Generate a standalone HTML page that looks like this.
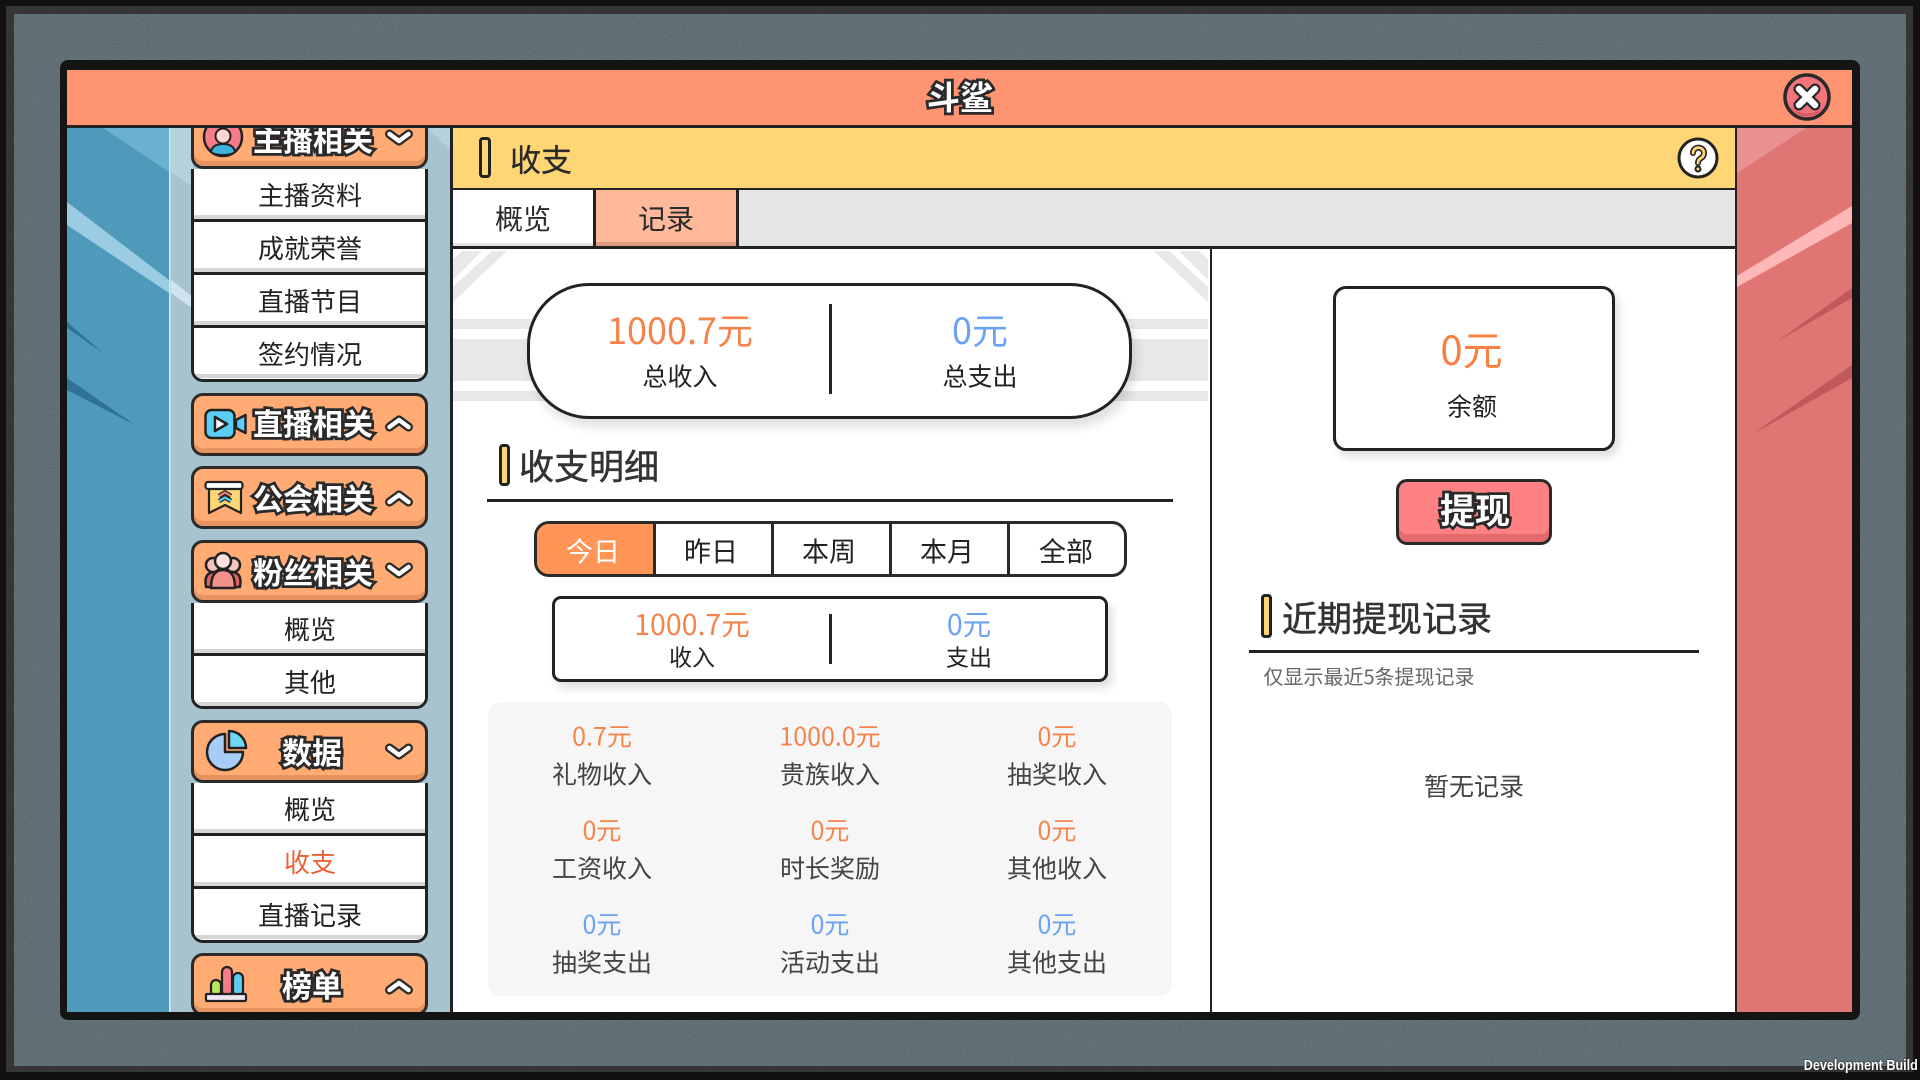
<!DOCTYPE html>
<html lang="zh">
<head>
<meta charset="utf-8">
<title>斗鲨</title>
<style>
html,body{margin:0;padding:0;width:1920px;height:1080px;overflow:hidden;background:#111;font-family:"Noto Sans CJK SC","Liberation Sans",sans-serif;color:#222}
*{box-sizing:border-box}
svg.l{position:absolute;left:0;top:0;width:1920px;height:1080px;display:block}
.a{position:absolute}
.t{position:absolute;transform:translate(-50%,-50%);white-space:nowrap;line-height:1}
.o{color:#F5844C}.b{color:#6BA3F2}
.out{font-weight:700;color:#fff;-webkit-text-stroke:5.5px #2a2a2a;paint-order:stroke fill}
.h{position:absolute;left:191px;width:237px;height:63px;border:3px solid #2a2a2a;border-radius:12px;background:#FFAB73;box-shadow:inset 0 -5px 0 #E6935F}
.g{position:absolute;left:191px;width:237px;border:3px solid #222;border-top:0;border-radius:0 0 12px 12px;background:#fff;overflow:hidden}
.it{height:53px;border-bottom:3px solid #222;background:#fff;box-shadow:inset 0 -4px 0 #d6d6d6}
.it:last-child{height:50px;border-bottom:0}
.mk{position:absolute;background:#FFD676;border:3px solid #222;border-radius:4px}
.ln{position:absolute;background:#222}
.seg{position:absolute;left:534px;top:521px;width:593px;height:56px;border:3px solid #2a2a2a;border-radius:15px;overflow:hidden;background:#fff}
.seg i{position:absolute;top:0;bottom:0;width:3px;background:#2a2a2a}
</style>
</head>
<body>

<svg class="l" viewBox="0 0 1920 1080" xmlns="http://www.w3.org/2000/svg">
<defs>
<filter id="n" x="0" y="0" width="100%" height="100%"><feTurbulence type="fractalNoise" baseFrequency="0.9" numOctaves="2" seed="4"/><feColorMatrix values="0 0 0 0 0  0 0 0 0 0  0 0 0 0 0  0.9 0 0 0 -0.25"/></filter>
</defs>
<rect x="0" y="0" width="1920" height="1080" fill="#111"/>
<rect x="6" y="6" width="1907" height="1066" fill="#363636"/>
<rect x="14" y="14" width="1892" height="1052" fill="#68787F"/>
<rect x="14" y="14" width="1892" height="1052" filter="url(#n)" opacity=".35"/>
<rect x="60" y="60" width="1800" height="960" rx="8" fill="#141414"/>
<rect x="67" y="70" width="1785" height="55" fill="#FF9472"/>
<rect x="67" y="125" width="1785" height="3" fill="#222"/>

<!-- left blue -->
<rect x="67" y="128" width="102" height="884" fill="#4F99BB"/>
<polygon points="103,128 169,128 169,172" fill="#6BB1CF"/>
<polygon points="67,202 169,280 169,293 67,225" fill="#9BCDE2"/>
<polygon points="67,322 67,328 103,353" fill="#2F7296"/>
<polygon points="67,378 67,390 135,425" fill="#2F7296"/>
<rect x="169" y="128" width="1.5" height="884" fill="#D5E8F0"/>
<rect x="170.5" y="128" width="279.5" height="884" fill="#A6C3CF"/>
<polygon points="171,128 427,128 450,150 450,128 171,128" fill="#B4D2DE"/>
<polygon points="171,128 193,128 193,187 171,172" fill="#B4D2DE"/>
<polygon points="171,280 193,297 193,309 171,293" fill="#CFE4EC"/>

<!-- right red -->
<rect x="1737" y="128" width="115" height="884" fill="#E07674"/>
<polygon points="1737,128 1806,128 1737,173" fill="#E89092"/>
<polygon points="1852,206 1852,223 1737,287 1737,276" fill="#FFB8B8"/>
<polygon points="1852,288 1852,298 1776,342" fill="#C05A5A"/>
<polygon points="1852,365 1852,378 1751,435" fill="#C05A5A"/>

<!-- centre -->
<rect x="450" y="128" width="1287" height="884" fill="#222"/>
<rect x="453" y="128" width="1282" height="60" fill="#FFD676"/>
<rect x="453" y="190" width="1282" height="56" fill="#E5E5E5"/>
<rect x="453" y="190" width="140" height="56" fill="#fff"/>
<rect x="453" y="243" width="140" height="3" fill="#E2E2E2"/>
<rect x="596" y="190" width="140" height="56" fill="#FFB89A"/>
<rect x="596" y="242" width="140" height="4" fill="#E09C80"/>
<rect x="593" y="190" width="3" height="57" fill="#222"/>
<rect x="736" y="190" width="3" height="57" fill="#222"/>
<rect x="453" y="249" width="757" height="763" fill="#fff"/>
<rect x="1212" y="249" width="523" height="763" fill="#fff"/>
<rect x="453" y="319" width="755" height="10" fill="#E8E8E8"/>
<rect x="453" y="339" width="755" height="42" fill="#E8E8E8"/>
<rect x="453" y="391" width="755" height="10" fill="#E8E8E8"/>
<polygon points="462,251 482,251 453,280 453,259" fill="#E8E8E8"/>
<polygon points="492,251 507,251 453,302 453,287" fill="#E8E8E8"/>
<polygon points="1199,251 1179,251 1208,280 1208,259" fill="#E8E8E8"/>
<polygon points="1169,251 1154,251 1208,302 1208,287" fill="#E8E8E8"/>
</svg>

<!-- window title -->
<div class="t out" style="left:960px;top:96px;font-size:33px">斗鲨</div>

<!-- sidebar -->
<div class="a" style="left:0;top:0;width:1920px;height:1080px;clip-path:inset(128px 1470px 68px 170px)">
  <div class="h" style="top:106px"></div>
  <div class="t out" style="left:313px;top:137.5px;font-size:30px">主播相关</div>
  <div class="g" style="top:169px;height:213px">
    <div class="it"></div><div class="it"></div><div class="it"></div><div class="it"></div>
  </div>
  <div class="t" style="left:310px;top:195px;font-size:26px">主播资料</div>
  <div class="t" style="left:310px;top:248px;font-size:26px">成就荣誉</div>
  <div class="t" style="left:310px;top:301px;font-size:26px">直播节目</div>
  <div class="t" style="left:310px;top:354px;font-size:26px">签约情况</div>

  <div class="h" style="top:393px"></div>
  <div class="t out" style="left:313px;top:422px;font-size:30px">直播相关</div>

  <div class="h" style="top:466px"></div>
  <div class="t out" style="left:313px;top:497px;font-size:30px">公会相关</div>

  <div class="h" style="top:540px"></div>
  <div class="t out" style="left:313px;top:571px;font-size:30px">粉丝相关</div>
  <div class="g" style="top:603px;height:106px">
    <div class="it"></div><div class="it"></div>
  </div>
  <div class="t" style="left:310px;top:629px;font-size:26px">概览</div>
  <div class="t" style="left:310px;top:682px;font-size:26px">其他</div>

  <div class="h" style="top:720px"></div>
  <div class="t out" style="left:312px;top:751px;font-size:30px">数据</div>
  <div class="g" style="top:783px;height:160px">
    <div class="it"></div><div class="it"></div><div class="it"></div>
  </div>
  <div class="t" style="left:310px;top:809px;font-size:26px">概览</div>
  <div class="t" style="left:310px;top:862px;font-size:26px;color:#EE6238">收支</div>
  <div class="t" style="left:310px;top:915px;font-size:26px">直播记录</div>

  <div class="h" style="top:953px"></div>
  <div class="t out" style="left:312px;top:984px;font-size:30px">榜单</div>

  <svg class="l" viewBox="0 0 1920 1080" xmlns="http://www.w3.org/2000/svg">
    <defs>
      <g id="up"><polyline points="-9.5,4 0,-3 9.5,4" fill="none" stroke="#2a2a2a" stroke-width="9" stroke-linecap="round" stroke-linejoin="round"/><polyline points="-9.5,4 0,-3 9.5,4" fill="none" stroke="#fff" stroke-width="4.5" stroke-linecap="round" stroke-linejoin="round"/></g>
      <g id="dn"><polyline points="-9.5,-4 0,3 9.5,-4" fill="none" stroke="#2a2a2a" stroke-width="9" stroke-linecap="round" stroke-linejoin="round"/><polyline points="-9.5,-4 0,3 9.5,-4" fill="none" stroke="#fff" stroke-width="4.5" stroke-linecap="round" stroke-linejoin="round"/></g>
    </defs>
    <use href="#dn" x="399" y="138"/>
    <use href="#up" x="399" y="423"/>
    <use href="#up" x="399" y="498"/>
    <use href="#dn" x="399" y="571"/>
    <use href="#dn" x="399" y="752"/>
    <use href="#up" x="399" y="986"/>

    <!-- avatar -->
    <circle cx="223" cy="137" r="19" fill="#F47C88" stroke="#222" stroke-width="2.5"/>
    <path d="M211,152 C212,146 217,144 223,144 C229,144 234,146 235,152 C231,156 215,156 211,152Z" fill="#3FB3E0" stroke="#222" stroke-width="2"/>
    <circle cx="223" cy="136" r="7.5" fill="#FBD7CC" stroke="#222" stroke-width="2"/>

    <!-- video -->
    <rect x="205.5" y="410" width="29" height="28" rx="6" fill="#5CCDF4" stroke="#222" stroke-width="2.5"/>
    <polygon points="215,417 215,431 227,424" fill="#fff" stroke="#222" stroke-width="2.5" stroke-linejoin="round"/>
    <polygon points="236,420 245.5,415 245.5,433 236,428" fill="#5CCDF4" stroke="#222" stroke-width="2.5" stroke-linejoin="round"/>

    <!-- banner -->
    <path d="M209,488 H241 V513 L225,505 L209,513 Z" fill="#FFD676" stroke="#222" stroke-width="2.2" stroke-linejoin="round"/>
    <rect x="205.5" y="482" width="37" height="7" rx="2.5" fill="#fff" stroke="#222" stroke-width="2.2"/>
    <polyline points="219,496 225,492.5 231,496" fill="none" stroke="#222" stroke-width="4.5"/>
    <polyline points="219,496 225,492.5 231,496" fill="none" stroke="#EE7C7C" stroke-width="2.2"/>
    <polyline points="219,501 225,497.5 231,501" fill="none" stroke="#222" stroke-width="4.5"/>
    <polyline points="219,501 225,497.5 231,501" fill="none" stroke="#5CCDF4" stroke-width="2.2"/>

    <!-- people -->
    <circle cx="213" cy="565" r="7" fill="#F6C5BB" stroke="#222" stroke-width="2.5"/>
    <circle cx="233" cy="565" r="7" fill="#F6C5BB" stroke="#222" stroke-width="2.5"/>
    <path d="M206,587 C204,576 208,572 215,572 H231 C238,572 242,576 240,587 Z" fill="#DE6565" stroke="#222" stroke-width="2.5" stroke-linejoin="round"/>
    <path d="M211,588 C211,574 216,570 223,570 C230,570 235,574 235,588 Z" fill="#F4908A" stroke="#222" stroke-width="2.5" stroke-linejoin="round"/>
    <circle cx="223" cy="561" r="8" fill="#FBE3DC" stroke="#222" stroke-width="2.5"/>

    <!-- pie -->
    <path d="M225,734 A18,18 0 1 0 243,752 L225,752 Z" fill="#A6CDF7" stroke="#222" stroke-width="2.5" stroke-linejoin="round"/>
    <path d="M229,731 A17,17 0 0 1 246,748 L229,748 Z" fill="#6FD7F5" stroke="#222" stroke-width="2.5" stroke-linejoin="round"/>

    <!-- bars -->
    <rect x="211" y="980" width="10" height="16" rx="5" fill="#B7E85C" stroke="#222" stroke-width="2.2"/>
    <rect x="222" y="967" width="10" height="29" rx="5" fill="#F47C88" stroke="#222" stroke-width="2.2"/>
    <rect x="233" y="973" width="10" height="23" rx="5" fill="#5CCDF4" stroke="#222" stroke-width="2.2"/>
    <rect x="206" y="994" width="40" height="7" rx="1" fill="#EEE6F2" stroke="#222" stroke-width="2.2"/>
  </svg>
</div>

<!-- header bar -->
<div class="mk" style="left:479px;top:137px;width:12px;height:41px"></div>
<div class="t" style="left:541px;top:158px;font-size:31px;color:#2a2a2a;-webkit-text-stroke:.3px #2a2a2a">收支</div>
<div class="t" style="left:523px;top:218px;font-size:28px;color:#2a2a2a">概览</div>
<div class="t" style="left:666px;top:218px;font-size:28px;color:#2a2a2a">记录</div>

<!-- total pill -->
<div class="a" style="left:527px;top:283px;width:605px;height:136px;border:3px solid #222;border-radius:62px;background:#fff;box-shadow:4px 8px 10px rgba(0,0,0,.12)"></div>
<div class="ln" style="left:829px;top:304px;width:3px;height:90px"></div>
<div class="t o" style="left:680px;top:328.5px;font-size:36px">1000.7元</div>
<div class="t" style="left:680px;top:376px;font-size:25px">总收入</div>
<div class="t b" style="left:980px;top:328.5px;font-size:36px">0元</div>
<div class="t" style="left:980px;top:376px;font-size:25px">总支出</div>

<!-- detail heading -->
<div class="mk" style="left:499px;top:444px;width:11px;height:42px"></div>
<div class="t" style="left:589px;top:465px;font-size:35px;color:#333;-webkit-text-stroke:.5px #333">收支明细</div>
<div class="ln" style="left:487px;top:499px;width:686px;height:3px"></div>

<!-- segment -->
<div class="seg">
  <div class="a" style="left:0;top:0;width:117px;height:50px;background:#FF9556"></div>
  <i style="left:116px"></i><i style="left:234px"></i><i style="left:352px"></i><i style="left:470px"></i>
</div>
<div class="t" style="left:593px;top:550px;font-size:27px;color:#fff">今日</div>
<div class="t" style="left:711px;top:550px;font-size:27px">昨日</div>
<div class="t" style="left:829px;top:550px;font-size:27px">本周</div>
<div class="t" style="left:947px;top:550px;font-size:27px">本月</div>
<div class="t" style="left:1066px;top:550px;font-size:27px">全部</div>

<!-- period card -->
<div class="a" style="left:552px;top:596px;width:556px;height:86px;border:3px solid #222;border-radius:9px;background:#fff;box-shadow:4px 6px 9px rgba(0,0,0,.13)"></div>
<div class="ln" style="left:829px;top:614px;width:3px;height:50px"></div>
<div class="t o" style="left:692px;top:623.5px;font-size:28.5px">1000.7元</div>
<div class="t" style="left:692px;top:656px;font-size:23px">收入</div>
<div class="t b" style="left:969px;top:623.5px;font-size:28.5px">0元</div>
<div class="t" style="left:969px;top:656px;font-size:23px">支出</div>

<!-- grid -->
<div class="a" style="left:488px;top:702px;width:684px;height:294px;border-radius:13px;background:#F6F6F6"></div>
<div class="t o" style="left:602px;top:736px;font-size:25px">0.7元</div>
<div class="t o" style="left:830px;top:736px;font-size:25px">1000.0元</div>
<div class="t o" style="left:1057px;top:736px;font-size:25px">0元</div>
<div class="t" style="left:602px;top:774px;font-size:25px;color:#444">礼物收入</div>
<div class="t" style="left:830px;top:774px;font-size:25px;color:#444">贵族收入</div>
<div class="t" style="left:1057px;top:774px;font-size:25px;color:#444">抽奖收入</div>
<div class="t o" style="left:602px;top:830px;font-size:25px">0元</div>
<div class="t o" style="left:830px;top:830px;font-size:25px">0元</div>
<div class="t o" style="left:1057px;top:830px;font-size:25px">0元</div>
<div class="t" style="left:602px;top:868px;font-size:25px;color:#444">工资收入</div>
<div class="t" style="left:830px;top:868px;font-size:25px;color:#444">时长奖励</div>
<div class="t" style="left:1057px;top:868px;font-size:25px;color:#444">其他收入</div>
<div class="t b" style="left:602px;top:924px;font-size:25px">0元</div>
<div class="t b" style="left:830px;top:924px;font-size:25px">0元</div>
<div class="t b" style="left:1057px;top:924px;font-size:25px">0元</div>
<div class="t" style="left:602px;top:962px;font-size:25px;color:#444">抽奖支出</div>
<div class="t" style="left:830px;top:962px;font-size:25px;color:#444">活动支出</div>
<div class="t" style="left:1057px;top:962px;font-size:25px;color:#444">其他支出</div>

<!-- right column -->
<div class="a" style="left:1333px;top:286px;width:282px;height:165px;border:3px solid #222;border-radius:13px;background:#fff;box-shadow:4px 6px 9px rgba(0,0,0,.13)"></div>
<div class="t" style="left:1471.5px;top:348px;font-size:40px;color:#F97F3E">0元</div>
<div class="t" style="left:1472px;top:406px;font-size:25px">余额</div>

<div class="a" style="left:1396px;top:479px;width:156px;height:66px;border:3.5px solid #2a2a2a;border-radius:11px;background:#FE8284;box-shadow:inset 0 -8px 0 #E56A6C"></div>
<div class="t out" style="left:1475px;top:509px;font-size:35px">提现</div>

<div class="mk" style="left:1261px;top:594px;width:11px;height:44px"></div>
<div class="t" style="left:1387px;top:617px;font-size:35px;color:#333;-webkit-text-stroke:.5px #333">近期提现记录</div>
<div class="ln" style="left:1249px;top:650px;width:450px;height:3px"></div>
<div class="t" style="left:1369px;top:676px;font-size:20px;color:#666">仅显示最近5条提现记录</div>
<div class="t" style="left:1474px;top:786px;font-size:25px;color:#444">暂无记录</div>

<!-- top icons -->
<svg class="l" viewBox="0 0 1920 1080" xmlns="http://www.w3.org/2000/svg">
  <!-- close -->
  <circle cx="1807" cy="97" r="22" fill="#F4747B" stroke="#2a2a2a" stroke-width="3.5"/>
  <path d="M1790,107 A20,20 0 0 0 1824,107 A26,26 0 0 1 1790,107Z" fill="#D85A62"/>
  <path d="M1799,89 L1815,105 M1815,89 L1799,105" stroke="#2a2a2a" stroke-width="11" stroke-linecap="round"/>
  <path d="M1799,89 L1815,105 M1815,89 L1799,105" stroke="#fff" stroke-width="6.5" stroke-linecap="round"/>
  <!-- help -->
  <circle cx="1698" cy="158" r="19" fill="#fff" stroke="#222" stroke-width="3"/>
  <path d="M1693,153 A5.5,5.5 0 1 1 1701,158 C1699,159.5 1698,160.5 1698,163" fill="none" stroke="#222" stroke-width="6" stroke-linecap="round"/>
  <circle cx="1698" cy="169" r="2.5" fill="#FFD676" stroke="#222" stroke-width="2"/>
  <path d="M1693,153 A5.5,5.5 0 1 1 1701,158 C1699,159.5 1698,160.5 1698,163" fill="none" stroke="#FFD676" stroke-width="2.8" stroke-linecap="round"/>
</svg>

<div class="a" style="right:2px;top:1058px;font-family:'Liberation Sans',sans-serif;font-size:15px;line-height:16px;font-weight:700;color:#fff;white-space:nowrap;transform:scaleX(.84);transform-origin:right center;text-shadow:0 0 2px #000">Development Build</div>

</body>
</html>
